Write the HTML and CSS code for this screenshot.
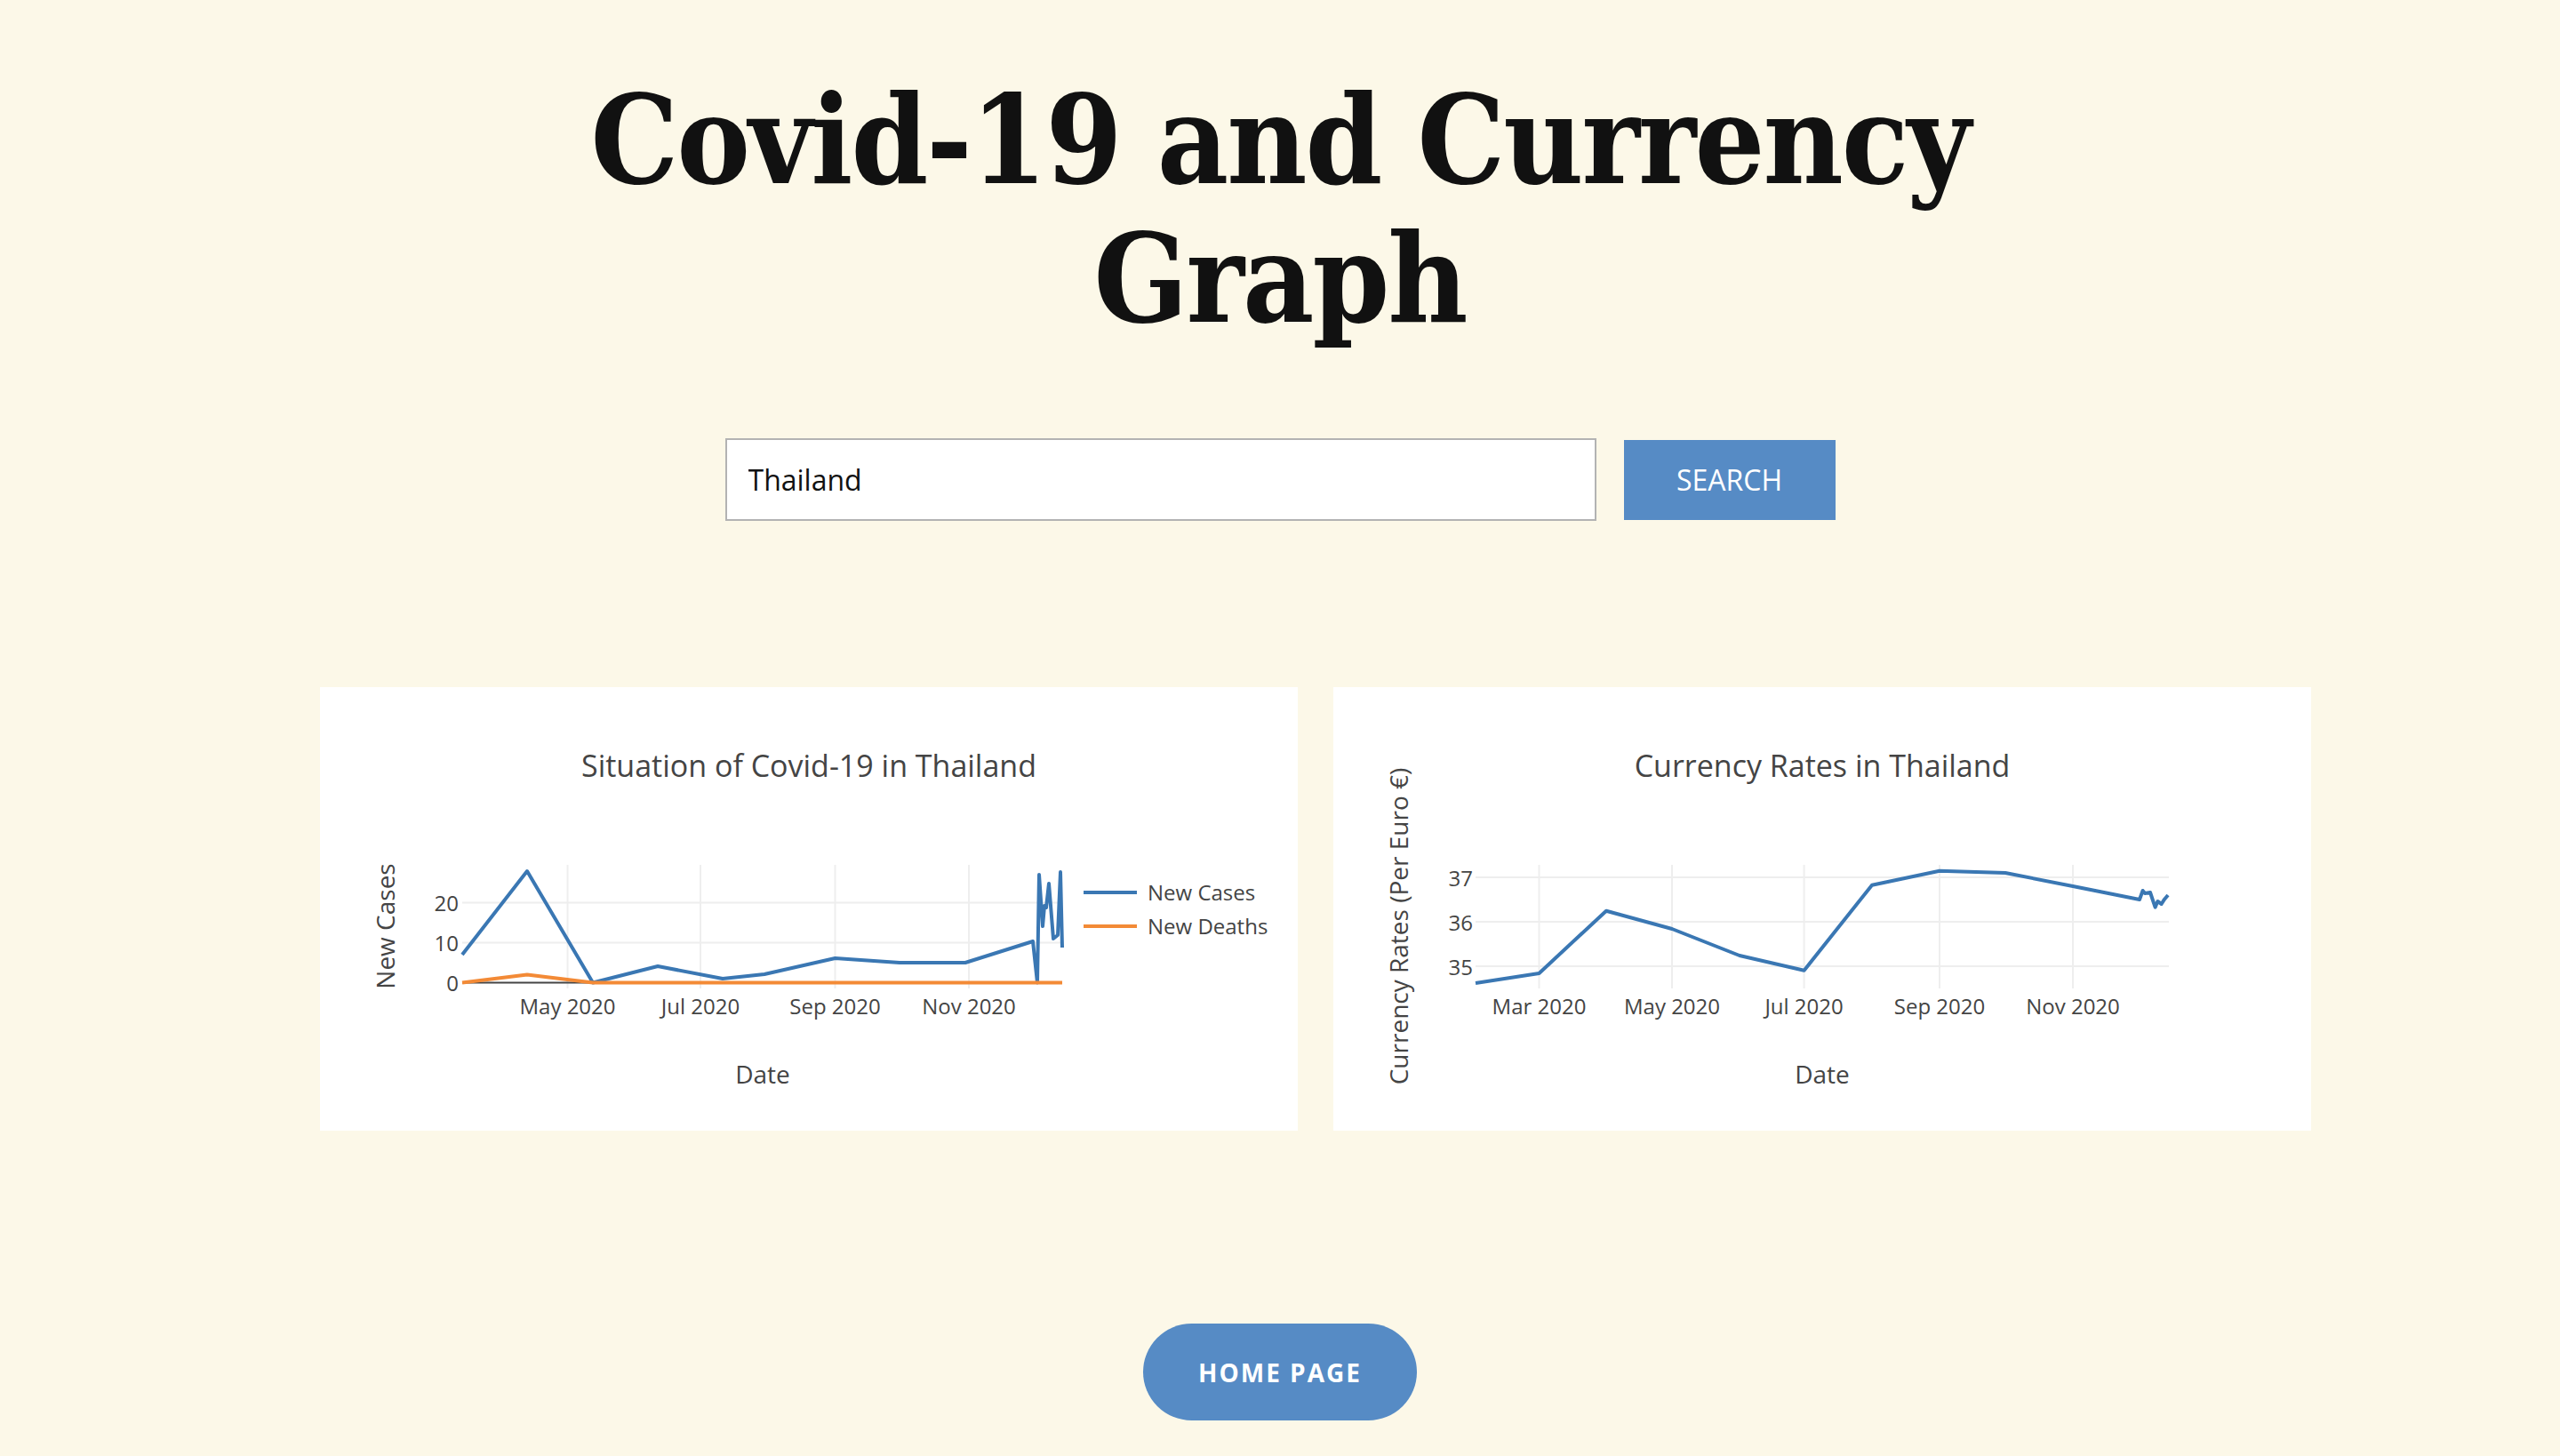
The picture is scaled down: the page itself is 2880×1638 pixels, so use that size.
FILE: index.html
```html
<!DOCTYPE html>
<html lang="en">
<head>
<meta charset="utf-8">
<title>Covid-19 and Currency Graph</title>
<link rel="stylesheet" href="styles.css">
</head>
<body>
<h1 class="title">Covid-19 and Currency Graph</h1>

<form class="search">
  <input class="search-input" type="text" value="Thailand">
  <button class="search-btn" type="button">SEARCH</button>
</form>

<section class="charts">
  <div class="card">
    <svg class="chart" width="1100" height="500" viewBox="0 0 1100 500">
      <text class="ch-title" x="550" y="101" text-anchor="middle">Situation of Covid-19 in Thailand</text>
      <g class="grid">
        <line x1="160" y1="242.5" x2="835" y2="242.5"/>
        <line x1="160" y1="287.5" x2="835" y2="287.5"/>
        <line x1="278.5" y1="200" x2="278.5" y2="339"/>
        <line x1="428" y1="200" x2="428" y2="339"/>
        <line x1="579.5" y1="200" x2="579.5" y2="339"/>
        <line x1="730" y1="200" x2="730" y2="339"/>
      </g>
      <line class="zero" x1="160" y1="332.5" x2="835" y2="332.5"/>
      <g class="tick">
        <text x="156" y="252" text-anchor="end">20</text>
        <text x="156" y="297" text-anchor="end">10</text>
        <text x="156" y="342" text-anchor="end">0</text>
        <text x="278.5" y="368" text-anchor="middle">May 2020</text>
        <text x="428" y="368" text-anchor="middle">Jul 2020</text>
        <text x="579.5" y="368" text-anchor="middle">Sep 2020</text>
        <text x="730" y="368" text-anchor="middle">Nov 2020</text>
      </g>
      <polyline class="s-blue" points="160,301 233,207 307,332.5 380,314 453,328 500,323 579.5,305 652,310 726,310 802,286 807,332.5 809,211 813,269 815,246 817,248 820,221 825,283 830,279 833,208 835,293"/>
      <polyline class="s-orange" points="160,332.5 233,323.5 307,332.5 835,332.5"/>
      <text class="ax-title" x="498" y="446" text-anchor="middle">Date</text>
      <text class="ax-title" transform="translate(84 269) rotate(-90)" text-anchor="middle">New Cases</text>
      <g class="legend">
        <line class="s-blue" x1="859" y1="231" x2="919" y2="231"/>
        <line class="s-orange" x1="859" y1="269" x2="919" y2="269"/>
        <text x="931" y="240">New Cases</text>
        <text x="931" y="278">New Deaths</text>
      </g>
    </svg>
  </div>

  <div class="card">
    <svg class="chart" width="1100" height="500" viewBox="0 0 1100 500">
      <text class="ch-title" x="550" y="101" text-anchor="middle">Currency Rates in Thailand</text>
      <g class="grid">
        <line x1="160" y1="214" x2="940" y2="214"/>
        <line x1="160" y1="264" x2="940" y2="264"/>
        <line x1="160" y1="314" x2="940" y2="314"/>
        <line x1="231.5" y1="200" x2="231.5" y2="339"/>
        <line x1="381" y1="200" x2="381" y2="339"/>
        <line x1="529.6" y1="200" x2="529.6" y2="339"/>
        <line x1="682" y1="200" x2="682" y2="339"/>
        <line x1="832" y1="200" x2="832" y2="339"/>
      </g>
      <g class="tick">
        <text x="157" y="223.5" text-anchor="end">37</text>
        <text x="157" y="273.5" text-anchor="end">36</text>
        <text x="157" y="323.5" text-anchor="end">35</text>
        <text x="231.5" y="368" text-anchor="middle">Mar 2020</text>
        <text x="381" y="368" text-anchor="middle">May 2020</text>
        <text x="529.6" y="368" text-anchor="middle">Jul 2020</text>
        <text x="682" y="368" text-anchor="middle">Sep 2020</text>
        <text x="832" y="368" text-anchor="middle">Nov 2020</text>
      </g>
      <polyline class="s-blue" points="160,333 231.5,322 307,251.7 381,272 457,302 529.6,318.7 606,222.7 682,206.7 756,209 832,224 907,239 910.6,229 913,232 919,231 924.6,247.7 927.4,241 931.6,244 935,238.7 939,234"/>
      <text class="ax-title" x="550" y="446" text-anchor="middle">Date</text>
      <text class="ax-title" transform="translate(84 269) rotate(-90)" text-anchor="middle">Currency Rates (Per Euro €)</text>
    </svg>
  </div>
</section>

<div class="home">
  <a class="home-btn" href="#">HOME PAGE</a>
</div>
</body>
</html>
```

FILE: styles.css
```css
html, body {
  margin: 0;
  padding: 0;
}

body {
  background: #fcf8e8;
  font-family: "Open Sans", "Liberation Sans", Arial, sans-serif;
  color: #111;
  min-height: 1638px;
}

.title {
  max-width: 1800px;
  margin: 80px auto 0;
  text-align: center;
  font-family: "DejaVu Serif Condensed", "DejaVu Serif", serif;
  font-weight: 700;
  font-size: 138px;
  letter-spacing: -2px;
  line-height: 156px;
  color: #111;
}

.search {
  display: flex;
  justify-content: center;
  align-items: center;
  gap: 31px;
  margin: 101px 0 0;
}

.search-input {
  box-sizing: border-box;
  width: 980px;
  height: 93px;
  border: 2px solid #b3b3b3;
  background: #fff;
  padding: 0 24px;
  font-family: "Open Sans", sans-serif;
  font-size: 32px;
  color: #111;
  outline: none;
}

.search-btn {
  width: 238px;
  height: 90px;
  border: none;
  background: #568bc5;
  color: #fff;
  font-family: "Open Sans", sans-serif;
  font-size: 32px;
  padding: 0;
}

.charts {
  display: flex;
  justify-content: center;
  gap: 40px;
  margin-top: 187px;
  padding-left: 80px;
}

.card {
  width: 1100px;
  height: 499px;
  background: #fff;
}

.chart {
  display: block;
  font-family: "Open Sans", sans-serif;
}

.ch-title {
  font-size: 34px;
  fill: #444;
}

.grid line {
  stroke: #eee;
  stroke-width: 2;
}

.zero {
  stroke: #444;
  stroke-width: 2;
}

.tick text {
  font-size: 24px;
  fill: #444;
}

.ax-title {
  font-size: 28px;
  fill: #444;
}

.legend text {
  font-size: 24px;
  fill: #444;
}

.s-blue {
  fill: none;
  stroke: #3a77b3;
  stroke-width: 4;
  stroke-linejoin: round;
}

.s-orange {
  fill: none;
  stroke: #f38a36;
  stroke-width: 4;
  stroke-linejoin: round;
}

.home {
  display: flex;
  justify-content: center;
  margin-top: 217px;
}

.home-btn {
  display: inline-flex;
  align-items: center;
  justify-content: center;
  height: 109px;
  padding: 0 62px;
  border-radius: 55px;
  background: #568bc5;
  color: #fff;
  text-decoration: none;
  font-family: "Open Sans", sans-serif;
  font-weight: 700;
  font-size: 28px;
  letter-spacing: 2px;
}
```
